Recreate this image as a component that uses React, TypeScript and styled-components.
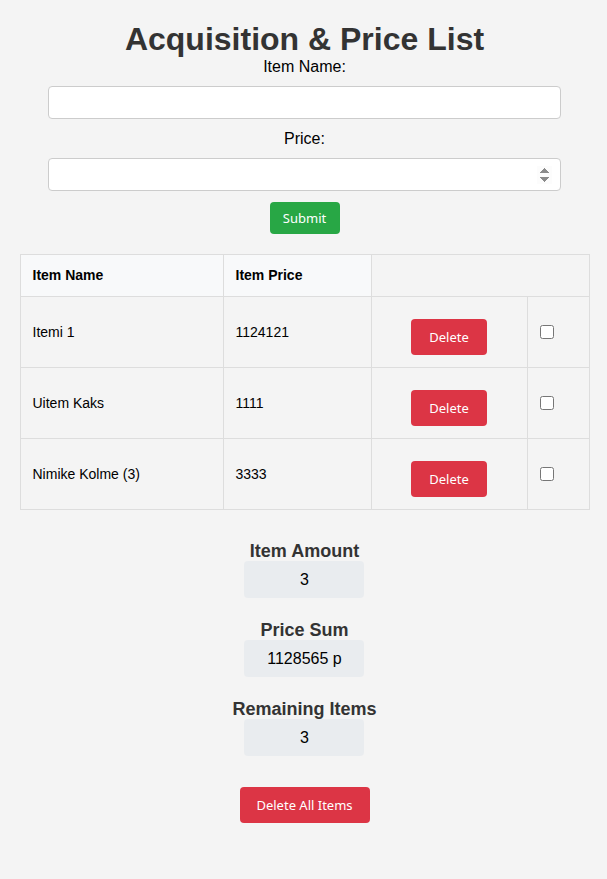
import React, { useState } from 'react';
import styled, { createGlobalStyle } from 'styled-components';

// Constants
const COLORS = {
  PAGE_BG: '#f4f4f4',
  TEXT: '#333',
  BORDER: '#ddd',
  INPUT_BORDER: '#ccc',
  HEAD_BG: '#f8f9fa',
  GREEN: '#28a745',
  RED: '#dc3545',
  STAT_BG: '#e9ecef'
};

const GlobalStyle = createGlobalStyle`
  html, body {
    margin: 0;
    background: ${COLORS.PAGE_BG};
  }
  body {
    padding: 21px 19px 20px 21px;
    font-family: "Liberation Sans", Arial, sans-serif;
    color: #000;
  }
`;

// Types
interface Item {
  id: number;
  name: string;
  price: number;
}

// Styled Components
const Page = styled.div`
  display: flex;
  flex-direction: column;
  align-items: center;
`;

const Title = styled.h1`
  margin: 0;
  font-size: 32px;
  line-height: 37px;
  font-weight: bold;
  color: ${COLORS.TEXT};
`;

const Form = styled.form`
  display: flex;
  flex-direction: column;
  align-items: center;
  width: 100%;
`;

const Label = styled.label<{ $first?: boolean }>`
  display: block;
  font-size: 16px;
  line-height: 18px;
  margin: ${p => (p.$first ? '0' : '11px')} 0 10px;
  color: #000;
`;

const Input = styled.input`
  box-sizing: border-box;
  width: 513px;
  height: 33px;
  padding: 8px;
  border: 1px solid ${COLORS.INPUT_BORDER};
  border-radius: 4px;
  background: #fff;
  font-size: 16px;
  font-family: inherit;

  &::-webkit-inner-spin-button {
    opacity: 1;
  }
`;

const ActionButton = styled.button<{ $variant: 'green' | 'red'; $width: number }>`
  box-sizing: border-box;
  width: ${p => p.$width}px;
  height: ${p => (p.$variant === 'green' ? 32 : 36)}px;
  border: none;
  border-radius: 4px;
  background: ${p => (p.$variant === 'green' ? COLORS.GREEN : COLORS.RED)};
  color: #fff;
  font-family: "Noto Sans", "Open Sans", sans-serif;
  font-size: 13px;
  cursor: pointer;
`;

const SubmitRow = styled.div`
  margin-top: 11px;
`;

const Table = styled.table`
  width: 569px;
  margin-top: 20px;
  border-collapse: collapse;
  table-layout: fixed;
  font-size: 14px;
`;

const HeadCell = styled.th<{ $blank?: boolean }>`
  padding: 12px;
  line-height: 17px;
  text-align: left;
  font-weight: bold;
  border: 1px solid ${COLORS.BORDER};
  background: ${p => (p.$blank ? 'transparent' : COLORS.HEAD_BG)};
`;

const Cell = styled.td`
  padding: 12px;
  border: 1px solid ${COLORS.BORDER};
  vertical-align: middle;
  line-height: 16px;
`;

const DeleteButton = styled(ActionButton)`
  display: block;
  margin: 10px auto 0;
`;

const Check = styled.input`
  display: block;
  margin: 0;
  width: 14px;
  height: 14px;
`;

const Stats = styled.div`
  display: flex;
  flex-direction: column;
  align-items: center;
  margin-top: 30px;
  gap: 21px;
`;

const Stat = styled.div`
  display: flex;
  flex-direction: column;
  align-items: center;
`;

const StatTitle = styled.h3`
  margin: 0;
  padding-top: 2px;
  font-size: 18px;
  line-height: 19px;
  font-weight: bold;
  color: ${COLORS.TEXT};
`;

const StatValue = styled.div`
  box-sizing: border-box;
  width: 120px;
  height: 37px;
  line-height: 37px;
  text-align: center;
  background: ${COLORS.STAT_BG};
  border-radius: 4px;
  font-size: 16px;
`;

const BottomRow = styled.div`
  margin-top: 31px;
`;

const initialItems: Item[] = [
  { id: 1, name: 'Itemi 1', price: 1124121 },
  { id: 2, name: 'Uitem Kaks', price: 1111 },
  { id: 3, name: 'Nimike Kolme (3)', price: 3333 }
];

// Component
const App: React.FC = () => {
  const [items, setItems] = useState<Item[]>(initialItems);
  const [checked, setChecked] = useState<number[]>([]);

  const sum = items.reduce((acc, i) => acc + i.price, 0);
  const remaining = items.filter(i => !checked.includes(i.id)).length;

  return (
    <Page>
      <GlobalStyle />
      <Title>Acquisition &amp; Price List</Title>
      <Form onSubmit={e => e.preventDefault()}>
        <Label $first htmlFor="name">Item Name:</Label>
        <Input id="name" type="text" />
        <Label htmlFor="price">Price:</Label>
        <Input id="price" type="number" />
        <SubmitRow>
          <ActionButton type="submit" $variant="green" $width={70}>Submit</ActionButton>
        </SubmitRow>
      </Form>

      <Table>
        <colgroup>
          <col style={{ width: 203 }} />
          <col style={{ width: 148 }} />
          <col style={{ width: 156 }} />
          <col style={{ width: 62 }} />
        </colgroup>
        <thead>
          <tr>
            <HeadCell>Item Name</HeadCell>
            <HeadCell>Item Price</HeadCell>
            <HeadCell $blank colSpan={2} />
          </tr>
        </thead>
        <tbody>
          {items.map(item => (
            <tr key={item.id}>
              <Cell>{item.name}</Cell>
              <Cell>{item.price}</Cell>
              <Cell>
                <DeleteButton
                  $variant="red"
                  $width={76}
                  onClick={() => setItems(items.filter(i => i.id !== item.id))}
                >
                  Delete
                </DeleteButton>
              </Cell>
              <Cell>
                <Check
                  type="checkbox"
                  checked={checked.includes(item.id)}
                  onChange={() =>
                    setChecked(c => (c.includes(item.id) ? c.filter(x => x !== item.id) : [...c, item.id]))
                  }
                />
              </Cell>
            </tr>
          ))}
        </tbody>
      </Table>

      <Stats>
        <Stat>
          <StatTitle>Item Amount</StatTitle>
          <StatValue>{items.length}</StatValue>
        </Stat>
        <Stat>
          <StatTitle>Price Sum</StatTitle>
          <StatValue>{sum} p</StatValue>
        </Stat>
        <Stat>
          <StatTitle>Remaining Items</StatTitle>
          <StatValue>{remaining}</StatValue>
        </Stat>
      </Stats>

      <BottomRow>
        <ActionButton $variant="red" $width={130} onClick={() => setItems([])}>
          Delete All Items
        </ActionButton>
      </BottomRow>
    </Page>
  );
};

export default App;
